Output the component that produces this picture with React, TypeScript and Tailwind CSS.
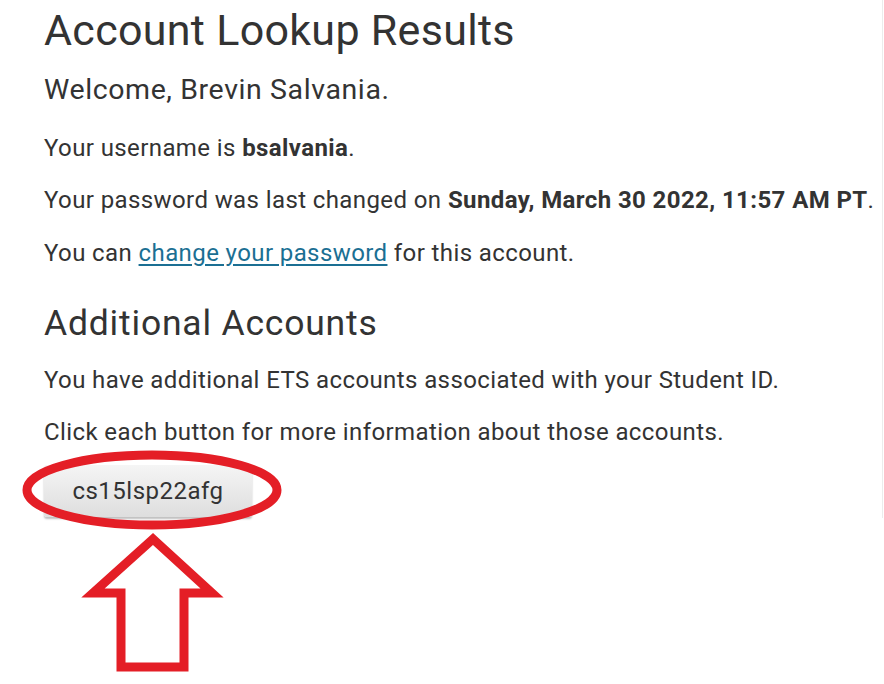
import React from "react";

const font = { fontFamily: "Roboto, 'Liberation Sans', sans-serif" };

function Annotation() {
  // red ellipse around the button and the outlined arrow pointing up at it
  return (
    <svg className="absolute left-0 top-0 pointer-events-none" width="300" height="684" viewBox="0 0 300 684">
      <ellipse cx="152" cy="490" rx="125" ry="35" fill="none" stroke="#e41e26" strokeWidth="9" />
      <polygon
        points="153,539 93,593 121,593 121,667 184,667 184,593 212,593"
        fill="none"
        stroke="#e41e26"
        strokeWidth="9"
        strokeLinejoin="miter"
      />
    </svg>
  );
}

export default function App() {
  return (
    <div className="relative w-[884px] h-[684px] bg-white overflow-hidden" style={font}>
      <div className="w-[883px] border-r border-[#ececec] pl-[44px] pb-[1px] text-[#333]">
        <h1 className="text-[43px] leading-[60px] font-normal tracking-[0.3px]">Account Lookup Results</h1>
        <p className="mt-[12px] text-[28.5px] leading-[36px] tracking-[0.6px]">Welcome, Brevin Salvania.</p>
        <div className="text-[24px] tracking-[0.4px] leading-[32px]">
          <p className="mt-[24px]">
            Your username is <b className="font-bold">bsalvania</b>.
          </p>
          <p className="mt-[20px]">
            Your password was last changed on <b className="font-bold">Sunday, March 30 2022, 11:57 AM PT</b>.
          </p>
          <p className="mt-[21px]">
            You can{" "}
            <a href="#" className="text-[#1b6f93] underline underline-offset-[3px]">
              change your password
            </a>{" "}
            for this account.
          </p>
        </div>
        <h2 className="mt-[32px] text-[35.5px] leading-[44px] font-normal tracking-[0.8px]">Additional Accounts</h2>
        <div className="text-[24px] tracking-[0.4px] leading-[32px]">
          <p className="mt-[19px]">You have additional ETS accounts associated with your Student ID.</p>
          <p className="mt-[20px]">Click each button for more information about those accounts.</p>
        </div>
        <button className="mt-[17px] h-[52px] w-[208px] rounded-[3px] bg-gradient-to-b from-[#f5f5f5] to-[#dedede] text-[24px] tracking-[0.5px] text-[#333] shadow-[0_2px_2px_rgba(0,0,0,0.25)]">
          cs15lsp22afg
        </button>
      </div>
      <Annotation />
    </div>
  );
}
